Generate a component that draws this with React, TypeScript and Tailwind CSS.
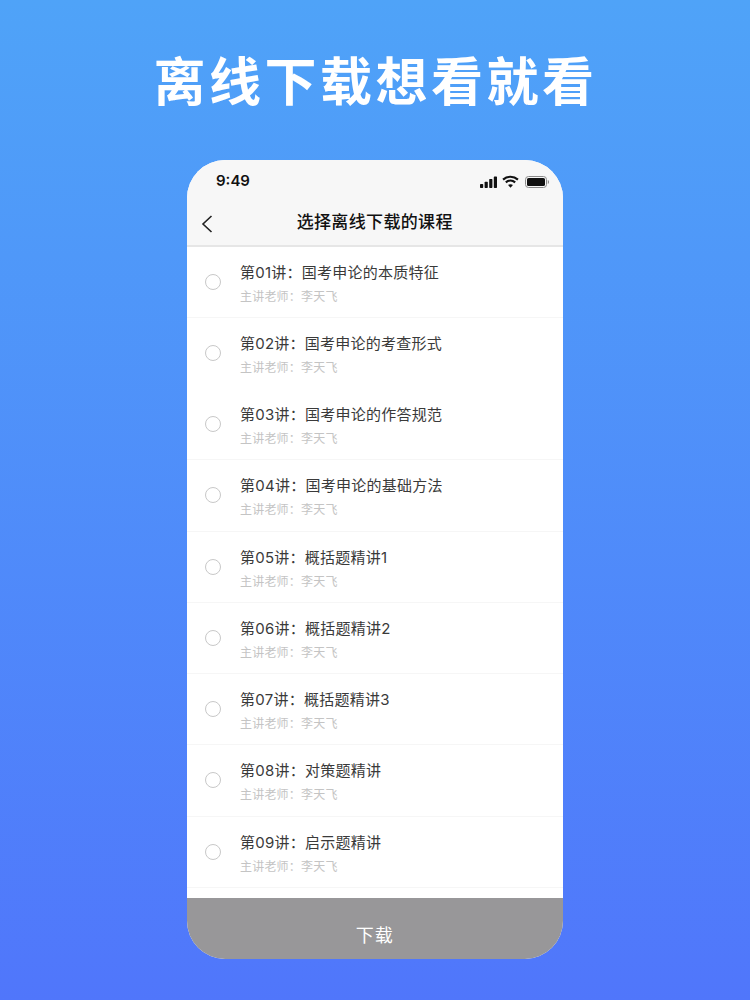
const FONT = "font-['Inter','Noto_Sans_CJK_SC',sans-serif]";

const lessons = [
  "第01讲：国考申论的本质特征",
  "第02讲：国考申论的考查形式",
  "第03讲：国考申论的作答规范",
  "第04讲：国考申论的基础方法",
  "第05讲：概括题精讲1",
  "第06讲：概括题精讲2",
  "第07讲：概括题精讲3",
  "第08讲：对策题精讲",
  "第09讲：启示题精讲",
];

function StatusIcons() {
  return (
    <div className="flex items-center gap-[4px]">
      <svg width="18" height="12" viewBox="0 0 18 12" fill="#111">
        <rect x="0" y="8" width="3.2" height="4" rx="0.7" />
        <rect x="4.6" y="5.8" width="3.2" height="6.2" rx="0.7" />
        <rect x="9.2" y="3" width="3.2" height="9" rx="0.7" />
        <rect x="13.8" y="0.4" width="3.2" height="11.6" rx="0.7" />
      </svg>
      <svg width="17" height="13" viewBox="0 0 16 12" fill="none" stroke="#111" strokeWidth="2">
        <path d="M1 4.2C5 .6 11 .6 15 4.2" />
        <path d="M3.6 6.8c2.6-2.2 6.2-2.2 8.8 0" />
        <path d="M8 11.8 5.7 9.3c1.3-1.1 3.3-1.1 4.6 0z" fill="#111" stroke="none" />
      </svg>
      <svg className="ml-[2px]" width="24" height="12" viewBox="0 0 24 12" fill="none">
        <rect x="0.5" y="0.5" width="21" height="11" rx="3" stroke="#8a8a8a" />
        <rect x="2" y="2" width="18" height="8" rx="1.6" fill="#111" />
        <path d="M22.8 4v4c.7-.3 1.2-1.1 1.2-2s-.5-1.7-1.2-2z" fill="#8a8a8a" />
      </svg>
    </div>
  );
}

function LessonRow({ title, noBorder }: { title: string; noBorder?: boolean }) {
  return (
    <div className={`flex h-[71.25px] shrink-0 items-center border-b pl-[18px] ${noBorder ? "border-white" : "border-[#f6f6f6]"}`}>
      <div className="h-[16px] w-[16px] rounded-full border border-[#c8c8c8]" />
      <div className="ml-[19px] pt-[4px]">
        <div className="text-[15px] leading-[20px] tracking-[0.25px] text-[#3a3a3a]">{title}</div>
        <div className="mt-[6px] text-[12px] leading-[16px] tracking-[0.2px] text-[#c4c4c4]">主讲老师：李天飞</div>
      </div>
    </div>
  );
}

export default function App() {
  return (
    <div className={`flex h-[1000px] w-[750px] flex-col items-center overflow-hidden bg-gradient-to-b from-[#4fa3f8] to-[#5076fb] ${FONT}`}>
      <h1 className="mt-[52px] h-[62px] pl-[1px] text-[52px] font-bold leading-[62px] tracking-[3.5px] text-white">
        离线下载想看就看
      </h1>

      <div className="mr-[0.5px] mt-[46px] flex h-[799px] w-[375.5px] flex-col overflow-hidden rounded-[38px] bg-white">
        <div className="h-[86.5px] shrink-0 border-b-2 border-[#e6e6e6] bg-[#f7f7f7]">
          <div className="flex h-[41px] items-center justify-between pl-[29px] pr-[14px] pt-[2px]">
            <span className="text-[15px] font-semibold text-[#111]">9:49</span>
            <StatusIcons />
          </div>
          <div className="relative flex h-[44px] items-center justify-center">
            <svg className="absolute left-[14px] top-[14px]" width="12" height="18" viewBox="0 0 12 18" fill="none" stroke="#222" strokeWidth="1.6">
              <path d="M10.5 1 2 9l8.5 8" />
            </svg>
            <span className="text-[17px] font-medium tracking-[0.35px] text-[#111]">选择离线下载的课程</span>
          </div>
        </div>

        <div className="flex-1 overflow-hidden">
          {lessons.map((title, i) => (
            <LessonRow key={title} title={title} noBorder={i === 1} />
          ))}
        </div>

        <div className="flex h-[61px] shrink-0 items-center justify-center bg-[#989799] pt-[14px] text-[18px] tracking-[1px] text-white">
          下载
        </div>
      </div>
    </div>
  );
}
